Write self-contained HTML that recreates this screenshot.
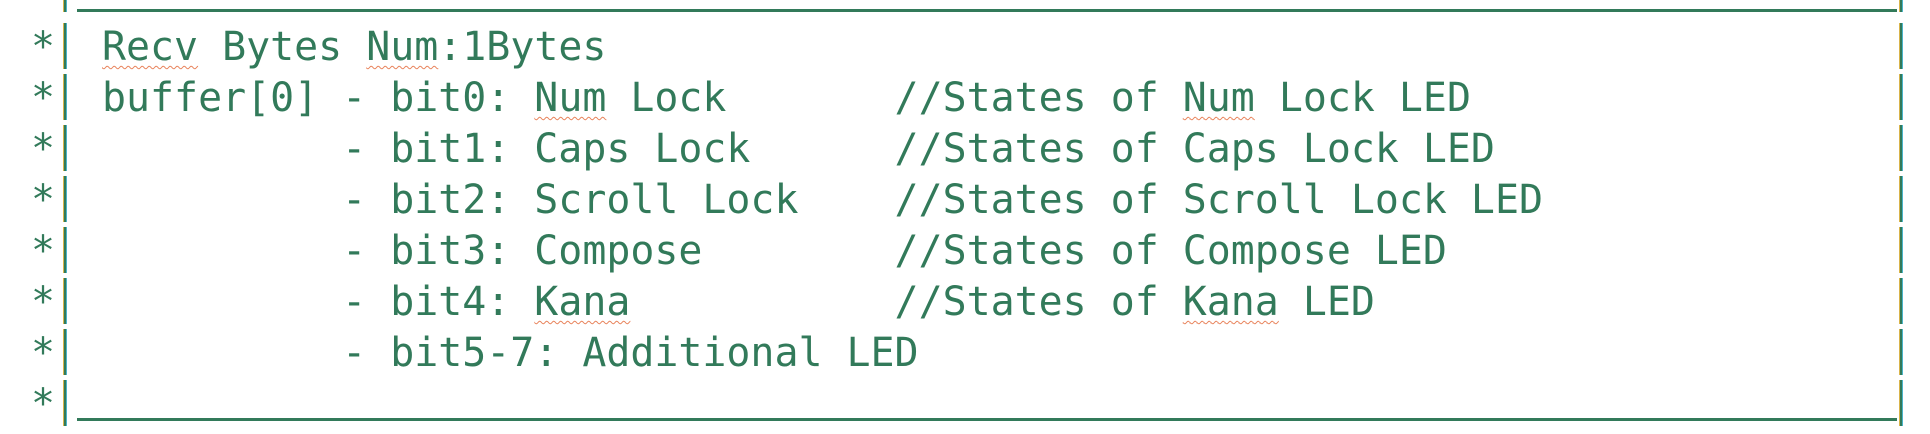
<!DOCTYPE html>
<html><head><meta charset="utf-8"><style>
body{margin:0;width:1930px;height:434px;background:#fff;overflow:hidden;position:relative;font-family:"DejaVu Sans Mono","Liberation Mono",monospace;color:#327a5a}
.l{position:absolute;left:102px;font-size:39.9px;line-height:51px;white-space:pre;height:51px}
.s{position:absolute;left:31px;font-size:39.9px;line-height:51px}
.w{text-decoration:underline wavy #e8825a;text-decoration-thickness:1px;text-underline-offset:5px}
.vb{position:absolute;width:2px;background:#327a5a;box-shadow:-1px 0 0 #d9b44a,1px 0 0 #4bb3c9}
.h{position:absolute;height:3px;background:#327a5a}
</style></head><body>
<div class="h" style="left:77px;top:9px;width:1820px"></div>
<div class="h" style="left:77px;top:418px;width:1820px"></div>
<div class="vb" style="left:64px;top:0;height:12px"></div>
<div class="vb" style="left:1900px;top:0;height:12px"></div>

<div class="s" style="top:22px">*</div>
<div class="s" style="top:73px">*</div>
<div class="s" style="top:124px">*</div>
<div class="s" style="top:175px">*</div>
<div class="s" style="top:226px">*</div>
<div class="s" style="top:277px">*</div>
<div class="s" style="top:328px">*</div>
<div class="s" style="top:379px">*</div>

<div class="vb" style="left:64px;top:23px;height:46px"></div>
<div class="vb" style="left:64px;top:74px;height:46px"></div>
<div class="vb" style="left:64px;top:125px;height:46px"></div>
<div class="vb" style="left:64px;top:176px;height:46px"></div>
<div class="vb" style="left:64px;top:227px;height:46px"></div>
<div class="vb" style="left:64px;top:278px;height:46px"></div>
<div class="vb" style="left:64px;top:329px;height:46px"></div>
<div class="vb" style="left:64px;top:380px;height:46px"></div>

<div class="vb" style="left:1900px;top:23px;height:46px"></div>
<div class="vb" style="left:1900px;top:74px;height:46px"></div>
<div class="vb" style="left:1900px;top:125px;height:46px"></div>
<div class="vb" style="left:1900px;top:176px;height:46px"></div>
<div class="vb" style="left:1900px;top:227px;height:46px"></div>
<div class="vb" style="left:1900px;top:278px;height:46px"></div>
<div class="vb" style="left:1900px;top:329px;height:46px"></div>
<div class="vb" style="left:1900px;top:380px;height:46px"></div>

<div class="l" style="top:22px"><span class="w">Recv</span> Bytes <span class="w">Num</span>:1Bytes</div>
<div class="l" style="top:73px">buffer[0] - bit0: <span class="w">Num</span> Lock       //States of <span class="w">Num</span> Lock LED</div>
<div class="l" style="top:124px">          - bit1: Caps Lock      //States of Caps Lock LED</div>
<div class="l" style="top:175px">          - bit2: Scroll Lock    //States of Scroll Lock LED</div>
<div class="l" style="top:226px">          - bit3: Compose        //States of Compose LED</div>
<div class="l" style="top:277px">          - bit4: <span class="w">Kana</span>           //States of <span class="w">Kana</span> LED</div>
<div class="l" style="top:328px">          - bit5-7: Additional LED</div>
</body></html>
